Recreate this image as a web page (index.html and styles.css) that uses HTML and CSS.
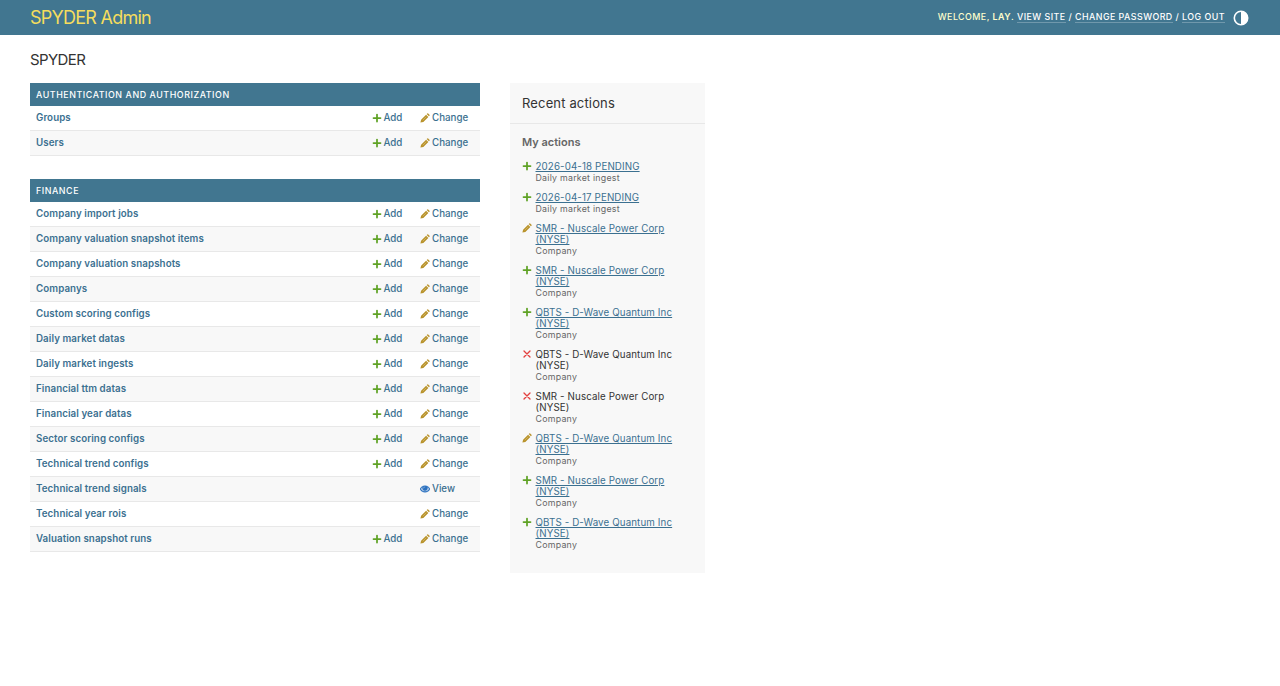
FILE: index.html
```
<!DOCTYPE html>
<html lang="en-us">
<head>
    <meta charset="UTF-8">
    <meta name="viewport" content="width=device-width, initial-scale=1.0">
    <title>Site administration | SPYDER Admin</title>
    <link rel="stylesheet" href="styles.css">
</head>
<body>
    <svg class="sprite" aria-hidden="true">
        <symbol id="add" viewBox="0 0 12 12">
            <path d="M6 1.8v8.4M1.8 6h8.4" fill="none" stroke="#5fa225" stroke-width="2.1" stroke-linecap="round"/>
        </symbol>
        <symbol id="change" viewBox="0 0 12 12">
            <path fill="#b8922a" d="M.5 11.5l.8-3.5 6-6 2.7 2.7-6 6zM8 1.3l.8-.7q.5-.4 1 0l1.6 1.6q.4.5 0 1l-.7.8z"/>
            <path d="M3.3 8.7l4.3-4.3" stroke="#e3cf93" stroke-width=".6"/>
        </symbol>
        <symbol id="view" viewBox="0 64 1792 1792">
            <path fill="#2b70bf" stroke="#2b70bf" stroke-width="90" d="M1664 960q-152-236-381-353 61 104 61 225 0 185-131.5 316.5t-316.5 131.5-316.5-131.5-131.5-316.5q0-121 61-225-229 117-381 353 133 205 333.5 326.5t434.5 121.5 434.5-121.5 333.5-326.5zm-720-384q0-20-14-34t-34-14q-125 0-214.5 89.5t-89.5 214.5q0 20 14 34t34 14 34-14 14-34q0-86 61-147t147-61q20 0 34-14t14-34zm848 384q0 34-20 69-140 230-376.5 368.5t-499.5 138.5-499.5-139-376.5-368q-20-35-20-69t20-69q140-229 376.5-368t499.5-139 499.5 139 376.5 368q20 35 20 69z"/>
        </symbol>
        <symbol id="delete" viewBox="0 0 12 12">
            <path d="M2.4 2.4l7.2 7.2M9.6 2.4l-7.2 7.2" fill="none" stroke="#e3403f" stroke-width="1.6" stroke-linecap="round"/>
        </symbol>
    </svg>

    <header>
        <div class="site-name">SPYDER Admin</div>
        <div class="user-tools">
            <div class="user-links">
                <span class="welcome">Welcome, <strong>Lay</strong>.</span>
                <a href="#">View site</a> / <a href="#">Change password</a> / <a href="#">Log out</a>
            </div>
            <button class="theme-toggle" aria-label="Toggle theme">
                <svg viewBox="0 0 16 16"><circle cx="8" cy="8" r="6.7" fill="none" stroke="#fff" stroke-width="1.6"/><path d="M8 1a7 7 0 0 1 0 14z" fill="#fff"/></svg>
            </button>
        </div>
    </header>

    <main>
        <h1>SPYDER</h1>
        <div class="columns">
            <div class="app-list" id="appList"></div>
            <aside>
                <h2>Recent actions</h2>
                <h3>My actions</h3>
                <ul id="actionList"></ul>
            </aside>
        </div>
    </main>

    <script src="script.js"></script>
</body>
</html>
```
FILE: styles.css
```
:root {
    --primary: #417690;
    --accent: #f5dd5d;
    --link-color: #3b7090;
    --quiet: #666;
    --darkened-bg: #f8f8f8;
    --hairline: #e8e8e8;
}

* {
    margin: 0;
    padding: 0;
    box-sizing: border-box;
}

body {
    font-family: Inter, "Liberation Sans", sans-serif;
    font-size: 9.75px;
    color: #333;
    background: #fff;
}

a {
    color: var(--link-color);
    text-decoration: none;
}

.sprite {
    display: none;
}

header {
    height: 35px;
    padding: 0 31px 0 30px;
    display: flex;
    justify-content: space-between;
    align-items: center;
    background: var(--primary);
    color: #ffc;
}

.site-name {
    font-size: 18px;
    font-weight: 400;
    letter-spacing: -0.75px;
    color: var(--accent);
}

.user-tools {
    display: flex;
    align-items: center;
}

.user-links {
    padding-bottom: 2px;
    font-size: 8.9px;
    font-weight: 500;
    letter-spacing: 0.45px;
    text-transform: uppercase;
    white-space: nowrap;
    color: #fff;
}

.user-links a {
    color: #fff;
    border-bottom: 1px solid rgba(255, 255, 255, 0.25);
}

.welcome {
    color: #ffc;
}

.welcome strong {
    font-weight: 600;
}

.theme-toggle {
    width: 16px;
    height: 16px;
    margin-left: 8px;
    border: none;
    background: none;
}

.theme-toggle svg {
    display: block;
    width: 16px;
    height: 16px;
}

main {
    padding: 15px 30px;
}

h1 {
    height: 33px;
    font-size: 15px;
    font-weight: 400;
    line-height: 20px;
    letter-spacing: -0.6px;
}

.columns {
    display: flex;
    align-items: flex-start;
    gap: 30px;
}

.app-list {
    width: 450px;
}

.module {
    margin-bottom: 23px;
}

.module h2 {
    height: 23px;
    padding-left: 6px;
    font-size: 8.9px;
    font-weight: 500;
    line-height: 24px;
    letter-spacing: 0.55px;
    text-transform: uppercase;
    background: var(--primary);
    color: #fff;
}

.row {
    height: 25px;
    padding: 0 6px 1px;
    display: grid;
    grid-template-columns: 335.5px 48.5px 1fr;
    align-items: center;
    border-bottom: 1px solid var(--hairline);
}

.row:nth-child(odd) {
    background: var(--darkened-bg);
}

.model {
    font-weight: 600;
    letter-spacing: 0.08px;
}

.tool {
    display: flex;
    align-items: center;
    gap: 2px;
    font-weight: 500;
}

.icon {
    width: 10px;
    height: 10px;
    flex: none;
}

aside {
    width: 195px;
    height: 490px;
    background: var(--darkened-bg);
}

aside h2 {
    height: 41px;
    padding-left: 12px;
    font-size: 13px;
    font-weight: 400;
    line-height: 41px;
    letter-spacing: 0.15px;
    border-bottom: 1px solid var(--hairline);
}

aside h3 {
    padding: 10px 12px 0;
    font-size: 11px;
    font-weight: 600;
    line-height: 16px;
    color: var(--quiet);
}

aside ul {
    padding: 11px 12px 0;
    list-style: none;
}

aside li {
    display: flex;
    gap: 3.5px;
    margin-bottom: 9px;
    line-height: 11px;
}

aside li a {
    text-decoration: underline;
}

.entry {
    width: 146px;
    letter-spacing: 0.12px;
}

.kind {
    display: block;
    font-size: 8.8px;
    letter-spacing: 0.25px;
    color: var(--quiet);
}
```
FILE: script.js
```
const apps = [
    { name: 'Authentication and Authorization', models: ['Groups', 'Users'] },
    {
        name: 'Finance',
        models: [
            'Company import jobs', 'Company valuation snapshot items', 'Company valuation snapshots',
            'Companys', 'Custom scoring configs', 'Daily market datas', 'Daily market ingests',
            'Financial ttm datas', 'Financial year datas', 'Sector scoring configs',
            'Technical trend configs', 'Technical trend signals', 'Technical year rois',
            'Valuation snapshot runs'
        ]
    }
];

const noAdd = ['Technical trend signals', 'Technical year rois'];
const viewOnly = ['Technical trend signals'];

const smr = 'SMR - Nuscale Power Corp (NYSE)';
const qbts = 'QBTS - D-Wave Quantum Inc (NYSE)';
const actions = [
    ['add', '2026-04-18 PENDING', 'Daily market ingest'],
    ['add', '2026-04-17 PENDING', 'Daily market ingest'],
    ['change', smr, 'Company'],
    ['add', smr, 'Company'],
    ['add', qbts, 'Company'],
    ['delete', qbts, 'Company'],
    ['delete', smr, 'Company'],
    ['change', qbts, 'Company'],
    ['add', smr, 'Company'],
    ['add', qbts, 'Company']
];

function icon(name) {
    return `<svg class="icon"><use href="#${name}"/></svg>`;
}

function tool(name, label) {
    return `<a href="#" class="tool">${icon(name)}${label}</a>`;
}

document.getElementById('appList').innerHTML = apps.map(app => `
    <section class="module">
        <h2>${app.name}</h2>
        ${app.models.map(model => `
            <div class="row">
                <a href="#" class="model">${model}</a>
                ${noAdd.includes(model) ? '<span></span>' : tool('add', 'Add')}
                ${viewOnly.includes(model) ? tool('view', 'View') : tool('change', 'Change')}
            </div>`).join('')}
    </section>`).join('');

document.getElementById('actionList').innerHTML = actions.map(([type, title, kind]) => `
    <li>
        ${icon(type)}
        <div class="entry">
            ${type === 'delete' ? title : `<a href="#">${title}</a>`}
            <span class="kind">${kind}</span>
        </div>
    </li>`).join('');
```
